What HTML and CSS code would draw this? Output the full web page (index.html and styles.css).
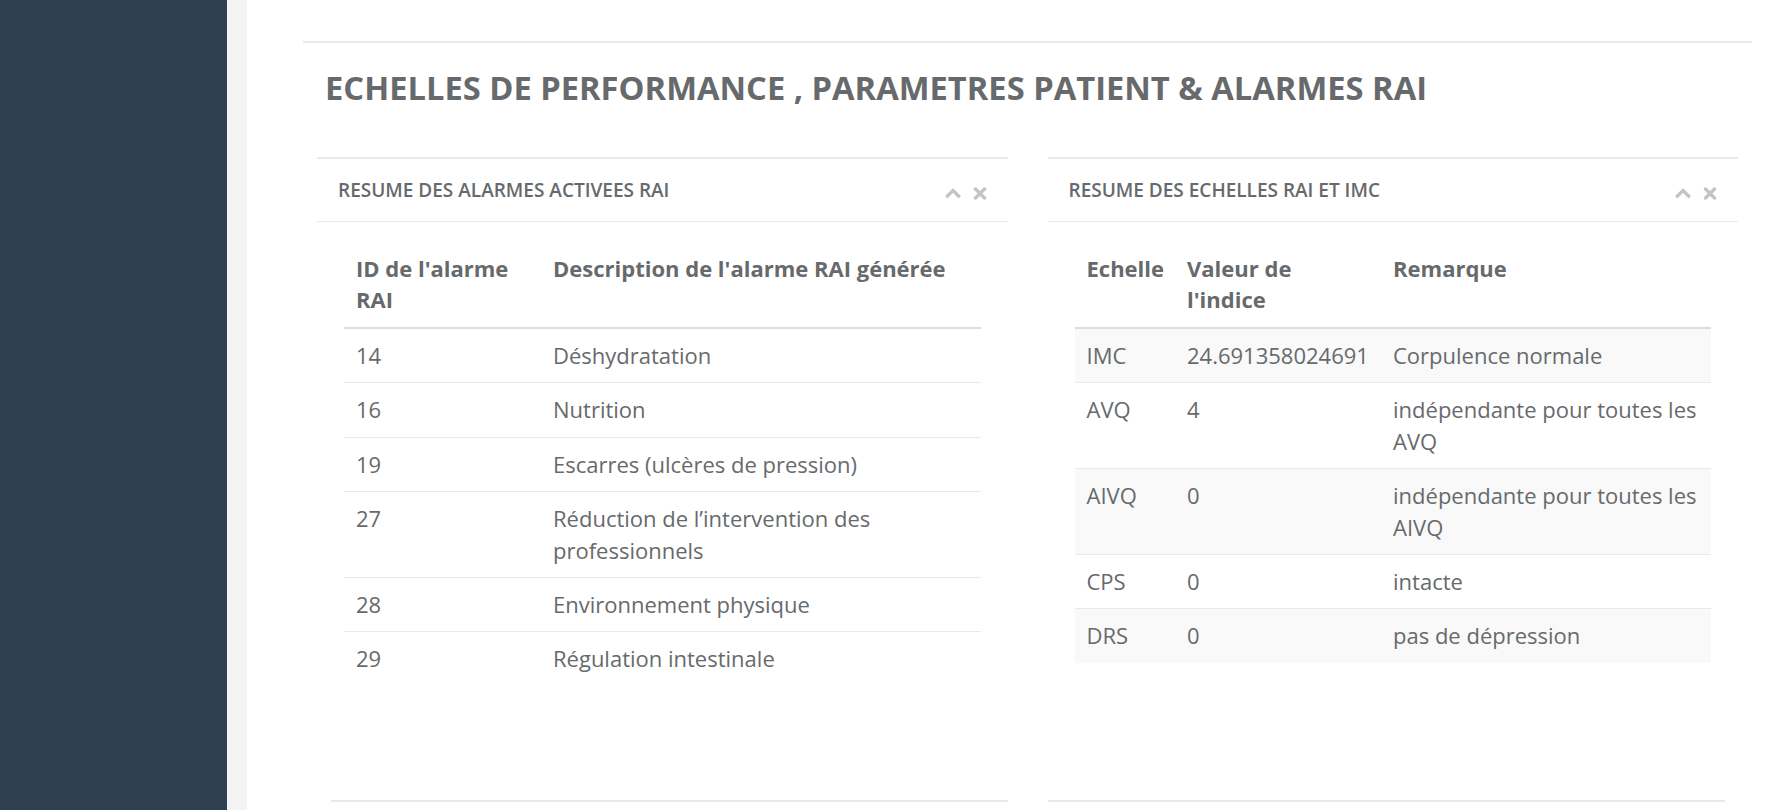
FILE: index.html
```html
<!DOCTYPE html>
<html lang="fr">
<head>
<meta charset="utf-8">
<title>Echelles de performance</title>
<link rel="stylesheet" href="styles.css">
</head>
<body>
<div class="layout">
  <nav class="sidebar"></nav>
  <div class="page-wrapper">
    <div class="wrapper">
      <div class="topline"></div>
      <h2 class="page-title">ECHELLES DE PERFORMANCE , PARAMETRES PATIENT &amp; ALARMES RAI</h2>
      <div class="row">
        <div class="col">
          <div class="ibox">
            <div class="ibox-title">
              <h5>RESUME DES ALARMES ACTIVEES RAI</h5>
              <div class="ibox-tools">
                <svg class="ic-up" width="18" height="11" viewBox="0 0 18 11"><path d="M2.2 9.2 L9 2.6 L15.8 9.2" fill="none" stroke="#c4c4c4" stroke-width="3.4" stroke-linejoin="miter"/></svg>
                <svg class="ic-x" width="14" height="13" viewBox="0 0 14 13"><path d="M2.5 2 L11.5 11 M11.5 2 L2.5 11" fill="none" stroke="#c4c4c4" stroke-width="3.4" stroke-linecap="round"/></svg>
              </div>
            </div>
            <div class="ibox-content">
              <table class="table">
                <thead>
                  <tr><th class="c-id">ID de l'alarme RAI</th><th>Description de l'alarme RAI générée</th></tr>
                </thead>
                <tbody>
                  <tr><td>14</td><td>Déshydratation</td></tr>
                  <tr><td>16</td><td>Nutrition</td></tr>
                  <tr><td>19</td><td>Escarres (ulcères de pression)</td></tr>
                  <tr><td>27</td><td>Réduction de l’intervention des professionnels</td></tr>
                  <tr><td>28</td><td>Environnement physique</td></tr>
                  <tr><td>29</td><td>Régulation intestinale</td></tr>
                </tbody>
              </table>
            </div>
          </div>
        </div>
        <div class="col">
          <div class="ibox">
            <div class="ibox-title">
              <h5>RESUME DES ECHELLES RAI ET IMC</h5>
              <div class="ibox-tools">
                <svg class="ic-up" width="18" height="11" viewBox="0 0 18 11"><path d="M2.2 9.2 L9 2.6 L15.8 9.2" fill="none" stroke="#c4c4c4" stroke-width="3.4" stroke-linejoin="miter"/></svg>
                <svg class="ic-x" width="14" height="13" viewBox="0 0 14 13"><path d="M2.5 2 L11.5 11 M11.5 2 L2.5 11" fill="none" stroke="#c4c4c4" stroke-width="3.4" stroke-linecap="round"/></svg>
              </div>
            </div>
            <div class="ibox-content">
              <table class="table table-striped">
                <thead>
                  <tr><th class="c-ech">Echelle</th><th class="c-val">Valeur de l'indice</th><th>Remarque</th></tr>
                </thead>
                <tbody>
                  <tr><td>IMC</td><td>24.691358024691</td><td>Corpulence normale</td></tr>
                  <tr><td>AVQ</td><td>4</td><td>indépendante pour toutes les AVQ</td></tr>
                  <tr><td>AIVQ</td><td>0</td><td>indépendante pour toutes les AIVQ</td></tr>
                  <tr><td>CPS</td><td>0</td><td>intacte</td></tr>
                  <tr><td>DRS</td><td>0</td><td>pas de dépression</td></tr>
                </tbody>
              </table>
            </div>
          </div>
        </div>
      </div>
      <div class="row">
        <div class="col">
          <div class="ibox ibox-next ibox-next-left"><div class="ibox-title"></div></div>
        </div>
        <div class="col">
          <div class="ibox ibox-next ibox-next-right"><div class="ibox-title"></div></div>
        </div>
      </div>
    </div>
  </div>
</div>
</body>
</html>
```

FILE: styles.css
```css
html, body {
  margin: 0;
  padding: 0;
  height: 100%;
  overflow: hidden;
}
body {
  font-family: "Open Sans", "Liberation Sans", Arial, sans-serif;
  color: #676a6c;
  background: #ffffff;
}
.layout {
  display: flex;
  min-height: 810px;
}
.sidebar {
  width: 227px;
  flex: 0 0 227px;
  background: #2f4050;
}
.page-wrapper {
  flex: 1;
  background: #f3f3f4;
  display: flex;
}
.wrapper {
  flex: 1;
  margin-left: 20px;
  background: #ffffff;
  padding: 41px 22px 0 50px;
}
.topline {
  margin: 0 6px;
  border-top: 2px solid #e7eaec;
}
.page-title {
  margin: 27px 0 0 28px;
  font-size: 32.7px;
  line-height: 36px;
  font-weight: 700;
  color: #676a6c;
}
.row {
  display: grid;
  grid-template-columns: 1fr 1fr;
}
.page-title + .row {
  margin-top: 51px;
}
.col {
  padding: 0 20px;
}
.ibox-title {
  border-top: 2px solid #e7eaec;
  border-bottom: 1px solid #e7eaec;
  padding: 21px 21px 20px 21px;
  height: 21px;
  display: flex;
  align-items: center;
  justify-content: space-between;
}
.ibox-title h5 {
  margin: 0;
  font-size: 19px;
  line-height: 21px;
  font-weight: 600;
  color: #676a6c;
}
.ibox-tools {
  display: flex;
  align-items: center;
  gap: 11px;
  padding-top: 5px;
}
.ic-up {
  margin-top: 1px;
}
.ibox-content {
  padding: 20px 27px 0 27px;
  height: 578px;
  box-sizing: border-box;
}
.table {
  width: 100%;
  border-collapse: separate;
  border-spacing: 0;
  font-size: 22px;
  line-height: 1.42857;
}
.table th,
.table td {
  padding: 11px 11px 11px 12px;
  text-align: left;
  vertical-align: top;
}
.table th {
  font-weight: 700;
  border-bottom: 2px solid #dddddd;
}
.table tbody tr + tr td {
  border-top: 1px solid #e7eaec;
}
.table-striped tbody tr:nth-child(odd) td {
  background: #f9f9f9;
}
.c-id { width: 174px; }
.c-ech { width: 74px; }
.c-val { width: 183px; }
.ibox-next .ibox-title {
  border-bottom: 0;
  height: 40px;
}
.ibox-next-left {
  margin-left: 14px;
}
.ibox-next-right {
  margin-right: 13px;
}
```
